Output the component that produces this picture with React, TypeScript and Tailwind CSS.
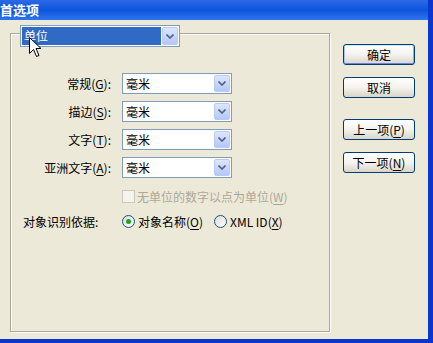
import { type FC, type ReactNode } from 'react';

const font = "font-['Noto_Sans_CJK_SC','Noto_Sans',sans-serif]";

const Chevron: FC = () => (
  <svg width="8" height="5" viewBox="0 0 8 5">
    <path d="M0.5 0.5 L4 4 L7.5 0.5" fill="none" stroke="#4D6185" strokeWidth="1.6" />
  </svg>
);

const ArrowBtn: FC = () => (
  <div className="flex h-full w-[16px] items-center justify-center rounded-[2px] border border-[#B9CBF3] bg-gradient-to-b from-[#DCE6FD] to-[#B4C8F6]">
    <Chevron />
  </div>
);

const Combo: FC<{ value: string }> = ({ value }) => (
  <div className="flex h-[21px] w-[110px] border border-[#7F9DB9] bg-white p-px">
    <div className="flex-1 pl-[2px] text-[12px] leading-[17px] text-black">{value}</div>
    <ArrowBtn />
  </div>
);

const U: FC<{ children: ReactNode }> = ({ children }) => <span className="underline underline-offset-2">{children}</span>;

const Button: FC<{ children: ReactNode; primary?: boolean }> = ({ children, primary }) => (
  <div
    className={`flex h-[21px] w-[72px] items-center justify-center rounded-[3px] border border-[#003C74] bg-gradient-to-b from-[#FFFFFF] via-[#F4F3EE] to-[#D9D5C8] text-[12px] leading-none text-black ${
      primary ? 'shadow-[inset_0_1px_0_#CEE7FF,inset_1px_0_0_#A6C7F5,inset_-1px_0_0_#8AAEF0,inset_0_-1px_0_#6982EE]' : ''
    }`}
  >
    {children}
  </div>
);

const Label: FC<{ children: ReactNode }> = ({ children }) => (
  <div className="flex h-[21px] items-center justify-end text-[12px] text-black">{children}</div>
);

const Radio: FC<{ checked?: boolean }> = ({ checked }) => (
  <div className="flex h-[13px] w-[13px] items-center justify-center rounded-full border border-[#1C5180] bg-gradient-to-br from-[#DCDBD4] to-[#FFFFFF]">
    {checked && <div className="h-[5px] w-[5px] rounded-full bg-[#21A121]" />}
  </div>
);

const App: FC = () => (
  <div className={`relative flex h-[343px] w-[433px] flex-col overflow-hidden border-r-[5px] border-b-[4px] border-[#0A35CF] bg-[#ECE9D8] ${font}`}>
    <div className="flex h-[20px] items-center bg-gradient-to-b from-[#2A6AE6] via-[#0B55DD] to-[#2E74EE] text-[13px] font-bold text-white">
      首选项
    </div>

    <div className="flex">
      <div className="ml-[10px] mt-[13px] h-[299px] w-[320px] border border-[#ACA899] shadow-[inset_1px_1px_0_#fff,1px_1px_0_#fff]">
        <div className="ml-[9px] mt-[-9px] flex h-[22px] w-[160px] border border-[#7F9DB9] bg-white p-px">
          <div className="flex-1 bg-[#316AC5] pl-[2px] text-[12px] leading-[18px] text-white">单位</div>
          <div className="ml-px">
            <ArrowBtn />
          </div>
        </div>

        <div className="mt-[26px] grid grid-cols-[100px_110px] gap-x-[11px] gap-y-[7px]">
          <Label>
            常规(<U>G</U>):
          </Label>
          <Combo value="毫米" />
          <Label>
            描边(<U>S</U>):
          </Label>
          <Combo value="毫米" />
          <Label>
            文字(<U>T</U>):
          </Label>
          <Combo value="毫米" />
          <Label>
            亚洲文字(<U>A</U>):
          </Label>
          <Combo value="毫米" />
        </div>

        <div className="mt-[12px] flex items-center gap-[2px] pl-[111px] text-[12px] leading-[13px] text-[#ACA899]">
          <div className="h-[13px] w-[13px] border border-[#CAC8BB] bg-[#F5F4EE]" />
          <span>
            无单位的数字以点为单位(<U>W</U>)
          </span>
        </div>

        <div className="mt-[12px] flex items-center text-[12px] leading-[13px] text-black">
          <div className="w-[111px] pl-[12px]">对象识别依据:</div>
          <Radio checked />
          <span className="ml-[3px]">
            对象名称(<U>O</U>)
          </span>
          <div className="ml-[11px]">
            <Radio />
          </div>
          <span className="ml-[3px]">
            XML ID(<U>X</U>)
          </span>
        </div>
      </div>

      <div className="ml-[13px] mt-[24px] flex flex-col">
        <Button primary>确定</Button>
        <div className="mt-[12px]">
          <Button>取消</Button>
        </div>
        <div className="mt-[21px]">
          <Button>
            上一项(<U>P</U>)
          </Button>
        </div>
        <div className="mt-[12px]">
          <Button>
            下一项(<U>N</U>)
          </Button>
        </div>
      </div>
    </div>

    <svg className="absolute left-[29px] top-[37px]" width="13" height="21" viewBox="0 0 13 21">
      <path d="M0.5 0.5 L0.5 16.5 L4.5 12.5 L7.5 19.5 L10 18.5 L7 11.5 L12 11.5 Z" fill="#fff" stroke="#000" strokeWidth="1" />
    </svg>
  </div>
);

export default App;
